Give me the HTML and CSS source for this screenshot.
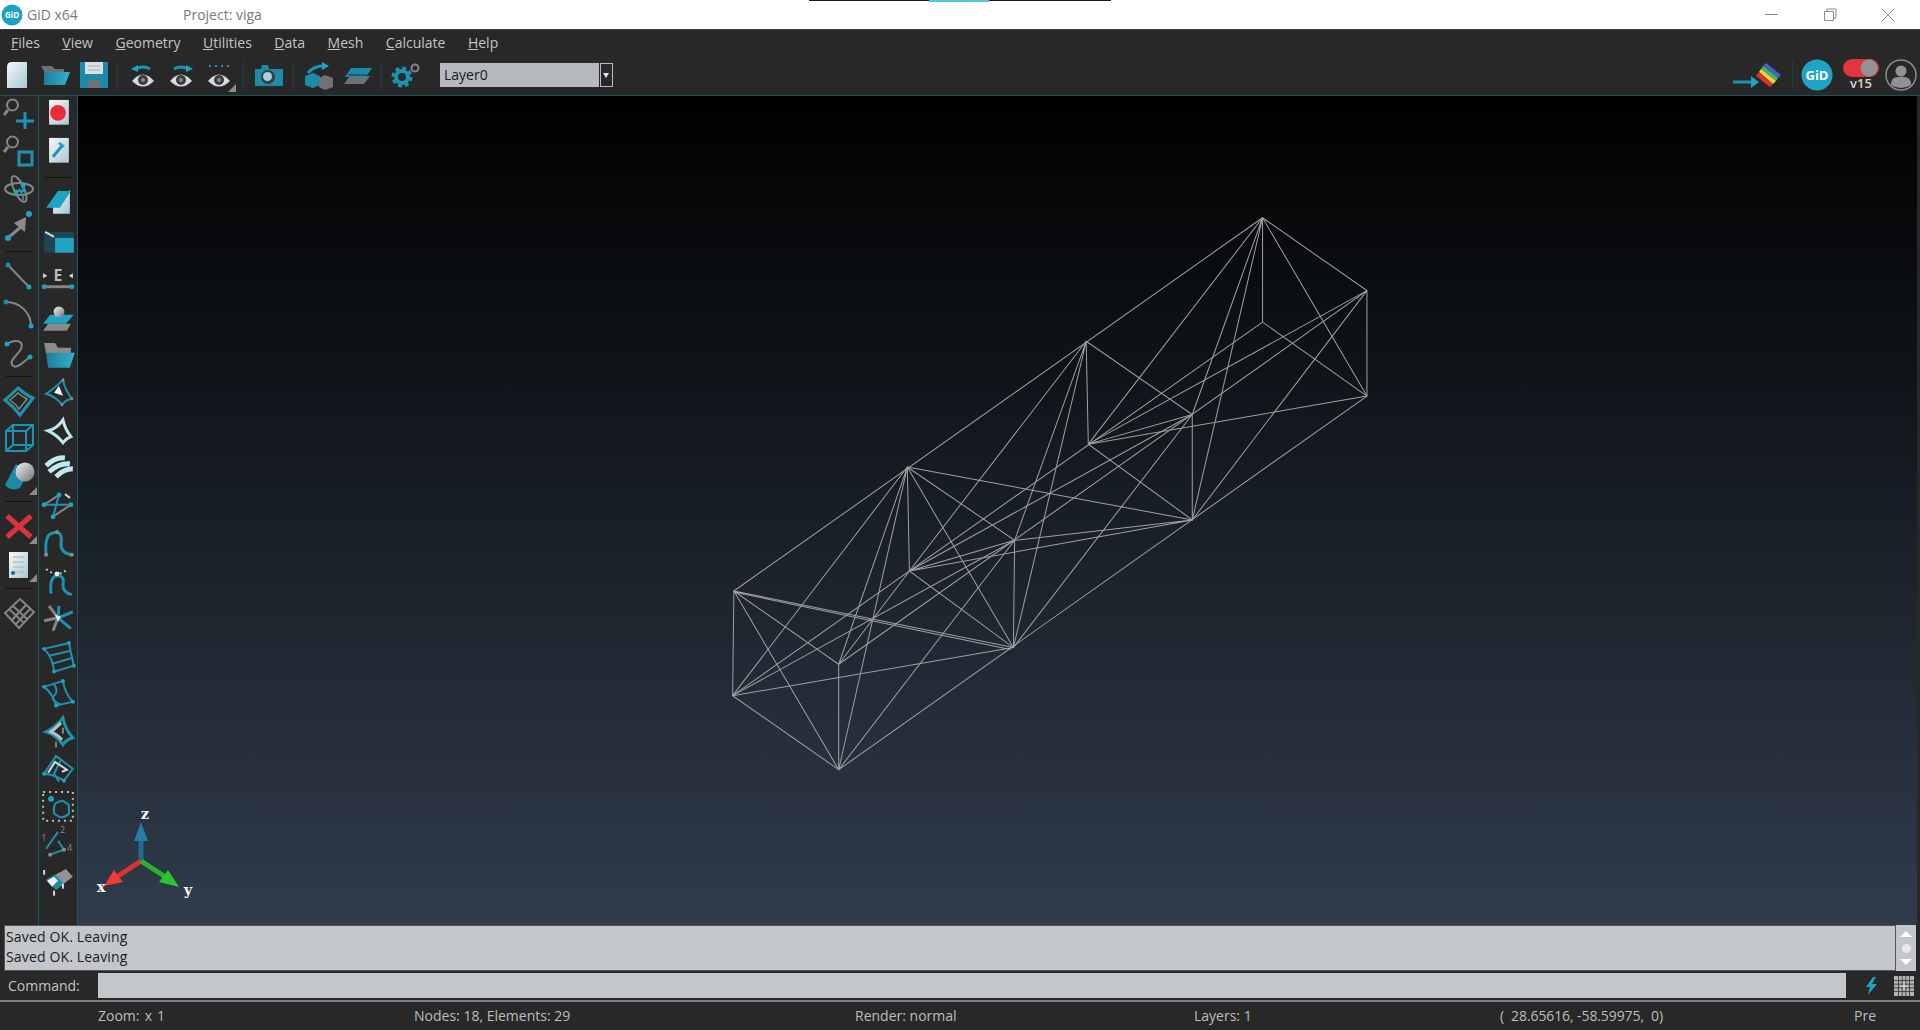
FILE: index.html
```html
<!DOCTYPE html>
<html lang="en">
    <head>
        <meta charset="UTF-8" />
        <title>GiD x64 - Project: viga</title>
        <link rel="stylesheet" href="styles.css">
    </head>
    <body>
        <div class="progress"><span></span></div>
        <header class="titlebar">
            <svg class="title-logo" width="22" height="22" viewBox="0 0 22 22"><circle class="f-teal" cx="11" cy="11" r="10.5"/><text class="logo-text" x="11" y="14" text-anchor="middle">GiD</text></svg>
            <span class="app-name">GiD x64</span>
            <span class="project-name">Project: viga</span>
            <div class="win-buttons">
                <svg width="58" height="28" viewBox="0 0 58 28"><path class="s-win" d="M22 13.5h13"/></svg>
                <svg width="58" height="28" viewBox="0 0 58 28"><path class="s-win" d="M23.5 10.500h9v9h-9zM26 10.500v-2.500h9v9h-2.500"/></svg>
                <svg width="58" height="28" viewBox="0 0 58 28"><path class="s-win" d="M23 8l12 12M35 8l-12 12"/></svg>
            </div>
        </header>

        <nav class="menubar">
            <span class="menu-item"><u>F</u>iles</span>
            <span class="menu-item"><u>V</u>iew</span>
            <span class="menu-item"><u>G</u>eometry</span>
            <span class="menu-item"><u>U</u>tilities</span>
            <span class="menu-item"><u>D</u>ata</span>
            <span class="menu-item"><u>M</u>esh</span>
            <span class="menu-item"><u>C</u>alculate</span>
            <span class="menu-item"><u>H</u>elp</span>
        </nav>

        <div class="toolbar">
            <svg class="tool tool-first" viewBox="0 0 38 38"><defs><linearGradient id="pageFill" x1="0" y1="0" x2="1" y2="1"><stop offset="0" stop-color="#f6f9fa"/><stop offset="1" stop-color="#a9c6d2"/></linearGradient><linearGradient id="folderFill" x1="0" y1="0" x2="1" y2="0"><stop offset="0" stop-color="#1c7f99"/><stop offset="1" stop-color="#33b0cf"/></linearGradient><linearGradient id="sphereFill" x1="0" y1="0" x2="1" y2="1"><stop offset="0" stop-color="#f2f2f2"/><stop offset="1" stop-color="#6f7376"/></linearGradient></defs><path fill="url(#pageFill)" d="M9 11q0-5 5-5h15v26H9z"/></svg>
            <svg class="tool" viewBox="0 0 38 38"><path class="f-grey2" d="M5 10h11l3 3h9v4H9z"/><path fill="url(#folderFill)" d="M8 16h26l-5 13H8z"/></svg>
            <svg class="tool" viewBox="0 0 38 38"><path class="f-teal2" d="M6 6h28v26H6z"/><path class="f-light" d="M11 6h18v12H11z"/><path class="s-dim" d="M14 10h12M14 14h12"/><path class="f-grey2" d="M14 24h12v8H14z"/></svg>
            <i class="tool-sep"></i>
            <svg class="tool" viewBox="0 0 38 38"><path class="s-teal-3" d="M12 13q7-4 14 0"/><path class="f-teal" d="M7 13l7-4v7z"/><path class="f-eye" d="M8 25q11-13 22 0q-11 11-22 0z"/><circle class="f-dark" cx="19" cy="24" r="5"/><circle class="f-grey" cx="19" cy="24" r="2"/></svg>
            <svg class="tool" viewBox="0 0 38 38"><path class="s-teal-3" d="M12 13q7-4 14 0"/><path class="f-teal" d="M31 13l-7-4v7z"/><path class="f-eye" d="M8 25q11-13 22 0q-11 11-22 0z"/><circle class="f-dark" cx="19" cy="24" r="5"/><circle class="f-grey" cx="19" cy="24" r="2"/></svg>
            <svg class="tool" viewBox="0 0 38 38"><path class="s-dots" d="M9 10h20"/><path class="f-eye" d="M8 25q11-13 22 0q-11 11-22 0z"/><circle class="f-dark" cx="19" cy="24" r="5"/><circle class="f-grey" cx="19" cy="24" r="2"/><path class="f-grey" d="M36 28v8h-8z"/></svg>
            <i class="tool-sep"></i>
            <svg class="tool" viewBox="0 0 38 38"><path class="f-teal2" d="M5 13h6l1-4h6l1 4h14v17H5z"/><circle class="f-dark" cx="18" cy="21" r="7"/><circle class="f-light2" cx="17.500" cy="20.500" r="4.500"/></svg>
            <i class="tool-sep"></i>
            <svg class="tool" viewBox="0 0 38 38"><path class="s-teal-3" d="M8 17q6-8 17-7"/><path class="f-teal" d="M29 10l-7-4v8z"/><path class="f-teal2" d="M5 20l8-3 7 3v9l-7 3-8-3z"/><path class="f-grey2" d="M19 22l6-3 8 3v9l-8 3-6-3z"/></svg>
            <svg class="tool" viewBox="0 0 38 38"><path class="f-grey2" d="M12 20h20l-6 8H6z"/><path class="f-teal2" d="M13 12h21l-6 9H7z"/><path class="s-dark" d="M10 19h19"/></svg>
            <i class="tool-sep"></i>
            <svg class="tool" viewBox="0 0 38 38"><circle class="s-teal-4" cx="14" cy="21" r="6"/><circle class="s-gear-teeth" cx="14" cy="21" r="9"/><circle class="s-grey-2" cx="27" cy="12" r="3.500"/></svg>
            <div class="layer-select">
                <span class="layer-value">Layer0</span>
                <span class="layer-arrow"></span>
            </div>
            <div class="toolbar-right">
                <svg width="52" height="28" viewBox="0 0 52 28"><path class="s-teal-3" d="M2 21h21"/><path class="f-teal" d="M28 21l-8-6v12z"/><path fill="#3f66c4" d="M35 2l15 12-3 3-15-12z"/><path fill="#46b56a" d="M32 5l15 12-2 3-15-12z"/><path fill="#f2d23a" d="M30 8l15 12-3 3-14-12z"/><path fill="#d8352f" d="M28 11l14 12-3 3-14-11z"/></svg>
                <i class="tool-sep tool-sep-right"></i>
                <svg class="right-logo" width="32" height="32" viewBox="0 0 32 32"><circle class="f-teal" cx="16" cy="16" r="15.500"/><text class="logo-text logo-text-big" x="16" y="21" text-anchor="middle">GiD</text></svg>
                <div class="version">
                    <svg width="36" height="18" viewBox="0 0 36 18"><rect class="f-red" width="36" height="18" rx="9"/><circle class="f-grey3" cx="26" cy="9" r="8.500"/></svg>
                    <span class="version-text">v15</span>
                </div>
                <svg class="user-icon" width="32" height="32" viewBox="0 0 32 32"><circle class="s-grey-1" cx="16" cy="16" r="15"/><circle class="f-grey3" cx="16" cy="12" r="5.500"/><path class="f-grey3" d="M6 26q0-8 7-8h6q7 0 7 8q-10 6-20 0z"/></svg>
            </div>
        </div>

        <main class="workspace">
            <aside class="sidebar sidebar-a">
                <svg class="side-icon" viewBox="0 0 38 38"><circle class="s-grey-2" cx="12.500" cy="11" r="5.500"/><path class="s-grey-3" d="M8 16l-4 5"/><path class="s-teal-3" d="M25 18v17M16 27h18"/></svg>
                <svg class="side-icon" viewBox="0 0 38 38"><circle class="s-grey-2" cx="12.500" cy="10" r="5.500"/><path class="s-grey-3" d="M8 15l-4 5"/><path class="s-teal-3" d="M19 20h13v13H19z"/></svg>
                <svg class="side-icon" viewBox="0 0 38 38"><ellipse class="s-grey-2" cx="19" cy="19" rx="14" ry="6"/><ellipse class="s-grey-2" cx="19" cy="19" rx="14" ry="5" transform="rotate(65 19 19)"/><path class="s-teal-2" d="M19 19q5 6 4 11M17 21h8M23 13v8"/><circle class="f-teal" cx="23" cy="15" r="2.500"/><circle class="f-teal" cx="16" cy="22" r="2.500"/></svg>
                <svg class="side-icon" viewBox="0 0 38 38"><path class="s-grey-3" d="M9 29l13-11"/><path class="f-grey" d="M26 9l-1 15-11-9z"/><circle class="f-teal" cx="8" cy="30" r="3"/><circle class="f-teal" cx="29" cy="6" r="3"/></svg>
                <i class="side-sep"></i>
                <svg class="side-icon" viewBox="0 0 38 38"><path class="s-grey-2" d="M8 8l21 22"/><circle class="f-teal2" cx="8" cy="8" r="2.500"/><circle class="f-teal" cx="29" cy="30" r="2.500"/></svg>
                <svg class="side-icon" viewBox="0 0 38 38"><path class="s-grey-2" d="M6 7C20 7 31 18 31 31"/><circle class="f-teal2" cx="6" cy="7" r="2.500"/><circle class="f-teal" cx="31" cy="31" r="2.500"/></svg>
                <svg class="side-icon" viewBox="0 0 38 38"><path class="s-grey-2" d="M7 11C14 6 25 7 21 16C17 23 8 28 13 33C18 36 24 28 30 24"/><circle class="f-teal" cx="7" cy="11" r="2.500"/><circle class="f-teal" cx="30" cy="24" r="2.500"/></svg>
                <i class="side-sep"></i>
                <svg class="side-icon" viewBox="0 0 38 38"><path class="s-teal-3" d="M18 6q8 7 15 10q-6 8-13 17q-6-8-15-15q6-5 13-12z"/><path class="s-tan" d="M18 11q5 4 9 6q-4 5-8 10q-3-5-9-9q4-3 8-7z"/></svg>
                <svg class="side-icon" viewBox="0 0 38 38"><path class="s-teal-2" d="M6 11h20v20H6zM13 5h20v20H13zM6 11l7-6M26 11l7-6M6 31l7-6M26 31l7-6"/></svg>
                <svg class="side-icon" viewBox="0 0 38 38"><path class="f-teal2" d="M16 6L5 27q6 7 15 3l7-13z"/><circle fill="url(#sphereFill)" cx="25" cy="14" r="9.500"/><path class="f-grey" d="M37 29v8h-8z"/></svg>
                <i class="side-sep"></i>
                <svg class="side-icon" viewBox="0 0 38 38"><path class="s-red" d="M7 9l24 21M31 9L7 30"/><path class="f-grey" d="M37 29v8h-8z"/></svg>
                <svg class="side-icon" viewBox="0 0 38 38"><path fill="url(#pageFill)" d="M9 7h19v26H9z"/><path class="s-dim" d="M13 12h11M13 17h11M13 22h11M13 27h11"/><circle class="f-teal3" cx="13" cy="28" r="2"/><path class="f-grey" d="M37 29v8h-8z"/></svg>
                <i class="side-sep"></i>
                <svg class="side-icon" viewBox="0 0 38 38"><path class="s-grey-2" d="M20 5l14 13-15 16L5 19zM13 12l14 13M9 15l14 13M26 11L11 27M30 15L15 31"/></svg>
            </aside>
            <aside class="sidebar sidebar-b">
                <svg class="side-icon" viewBox="0 0 38 38"><path fill="url(#pageFill)" d="M10 6h20v25H10z"/><circle class="f-red2" cx="19" cy="19" r="8"/></svg>
                <svg class="side-icon" viewBox="0 0 38 38"><path fill="url(#pageFill)" d="M10 6h20v25H10z"/><path class="s-teal-3" d="M14 25l9-11"/><path class="f-teal" d="M21 10l5 4-2 2-5-4z"/></svg>
                <i class="side-sep side-sep-wide"></i>
                <svg class="side-icon" viewBox="0 0 38 38"><path fill="url(#pageFill)" d="M14 17l17-12v24H14z"/><path class="f-teal" d="M19 6h13l-11 17H7z"/></svg>
                <svg class="side-icon" viewBox="0 0 38 38"><path class="f-tealdark" d="M5 9h30v21H5z"/><path class="f-teal" d="M16 15h19v15H16z"/><path class="s-white-2" d="M6 9l9 5"/></svg>
                <svg class="side-icon" viewBox="0 0 38 38"><text class="e-mark" x="19" y="21" text-anchor="middle">E</text><path class="f-light" d="M8 16l-4-2.500v5zM30 16l4-2.500v5z"/><path class="s-grey-3" d="M6 27h26"/><circle class="f-teal" cx="5" cy="27" r="2.500"/><circle class="f-teal" cx="33" cy="27" r="2.500"/></svg>
                <svg class="side-icon" viewBox="0 0 38 38"><path class="f-grey" d="M9 26h23l-4 7H4z"/><path class="f-teal" d="M11 17h24l-8 9H4z"/><circle fill="url(#sphereFill)" cx="20" cy="14" r="5.500"/></svg>
                <svg class="side-icon" viewBox="0 0 38 38"><path class="f-grey" d="M5 7h11l3 5h13v6H7z"/><path fill="url(#folderFill)" d="M7 17h29l-5 15H9z"/></svg>
                <svg class="side-icon" viewBox="0 0 38 38"><path class="s-teal-2" d="M24 7Q15 16 7 21Q17 24 23 32Q27 27 33 26Q26 17 24 7z"/><path class="f-white" d="M20 13L24 23L15 20z"/><circle class="f-grey" cx="24" cy="7" r="1.500"/><circle class="f-grey" cx="23" cy="32" r="1.500"/><circle class="f-grey" cx="33" cy="26" r="1.500"/></svg>
                <svg class="side-icon" viewBox="0 0 38 38"><path class="s-icy" d="M24 9Q18 18 9 20Q18 24 24 32Q27 28 32 26Q26 18 24 9z"/></svg>
                <svg class="side-icon" viewBox="0 0 38 38"><path class="s-icy-4" d="M7 18Q16 9 26 10M10 24Q20 15 31 16M17 29Q25 21 34 21"/></svg>
                <svg class="side-icon" viewBox="0 0 38 38"><path class="s-grey-2" d="M5 19L20 9M14 31L32 19"/><path class="s-teal-2" d="M5 19H32M14 31L20 9"/><circle class="f-teal" cx="5" cy="19" r="2.500"/><circle class="f-teal" cx="14" cy="31" r="2.500"/><circle class="f-teal" cx="32" cy="19" r="2.500"/><circle class="f-teal" cx="20" cy="9" r="2.500"/><path class="s-white-2" d="M26 8l5 4"/></svg>
                <svg class="side-icon" viewBox="0 0 38 38"><path class="s-teal-3" d="M7 31Q5 10 14 9Q24 6 22 20Q22 30 33 31"/><circle class="f-grey" cx="7" cy="31" r="2"/><circle class="f-grey" cx="33" cy="31" r="2"/><circle class="f-grey" cx="18" cy="8" r="2"/></svg>
                <svg class="side-icon" viewBox="0 0 38 38"><path class="s-teal-3" d="M12 33Q10 16 18 15Q26 14 24 24Q24 32 33 34"/><path class="s-dots-thin" d="M7 8Q18 18 29 8"/><circle class="f-white" cx="18" cy="13" r="2.500"/></svg>
                <svg class="side-icon" viewBox="0 0 38 38"><path class="s-grey-3" d="M5 22L19 19M10 7L19 19M14 32L19 19"/><path class="s-teal-3" d="M19 19L34 13M20 7L19 19M19 19L32 30"/><path class="f-white" d="M16 16l6 2-3 5z"/></svg>
                <svg class="side-icon" viewBox="0 0 38 38"><path class="s-teal-2" d="M5 13L30 7L35 30L15 36Q14 22 5 13zM10 20L32 15M13 28L34 22"/><circle class="f-teal" cx="5" cy="13" r="2"/><circle class="f-teal" cx="30" cy="7" r="2"/><circle class="f-teal" cx="35" cy="30" r="2"/><circle class="f-teal" cx="15" cy="36" r="2"/></svg>
                <svg class="side-icon" viewBox="0 0 38 38"><path class="s-teal-2" d="M5 13L24 7Q26 20 34 28L17 32Q14 20 5 13zM15 10Q20 18 15 22T22 31"/><circle class="f-teal" cx="5" cy="13" r="2"/><circle class="f-teal" cx="24" cy="7" r="2"/><circle class="f-teal" cx="34" cy="28" r="2"/><circle class="f-teal" cx="17" cy="32" r="2"/></svg>
                <svg class="side-icon" viewBox="0 0 38 38"><path class="s-teal-3" d="M24 6Q16 16 7 20Q17 23 24 33Q27 28 34 26Q26 17 24 6z"/><path class="s-light-3" d="M22 11Q16 17 12 20Q19 23 23 28"/><path class="s-grey-2" d="M24 16v6M17 30v6"/></svg>
                <svg class="side-icon" viewBox="0 0 38 38"><path class="s-teal-2" d="M5 25L17 7L34 20L25 32Q16 26 5 25z"/><path class="s-teal-2" d="M22 11L15 25L20 33"/><path class="s-white-2" d="M9 24l7-11 12 8-5 2"/><circle class="f-teal" cx="5" cy="25" r="2"/><circle class="f-teal" cx="25" cy="32" r="2"/></svg>
                <svg class="side-icon" viewBox="0 0 38 38"><path class="s-dots-square" d="M4 5h30v29H4z"/><circle class="f-teal" cx="12" cy="12" r="3"/><path class="s-teal-2" d="M16 17q4-3 8-3l6 4v9q-5 5-10 3l-5-3q-1-6 1-10z"/></svg>
                <svg class="side-icon" viewBox="0 0 38 38"><path class="s-teal-2" d="M7 25L19 8M19 17L25 26L11 31"/><text class="small-num" x="2" y="17">1</text><text class="small-num" x="21" y="9">2</text><text class="small-num" x="28" y="27">4</text><circle class="f-grey" cx="11" cy="31" r="2"/><circle class="f-grey" cx="25" cy="26" r="2"/></svg>
                <svg class="side-icon" viewBox="0 0 38 38"><path class="f-grey3" d="M7 18L27 7L34 15L17 28z"/><path class="f-teal2" d="M7 18l9-5 8 8-7 7z"/><path class="f-white" d="M8 19l7-4 4 4-6 6z"/><path class="s-white-2" d="M5 8v5M24 22v5M15 29v5"/></svg>
            </aside>
            <section class="viewport">
                <svg class="wire-model" viewBox="0 0 1568 1568" preserveAspectRatio="none">
                    <g class="wire">
                        <!-- lengthwise edges -->
                        <path d="M33 1057L1289 48M282 1255L1537 245M282 1540L1537 530M30 1340L1289 330"/>
                        <!-- cross sections -->
                        <path d="M33 1057L30 1340L282 1540L282 1255Z"/>
                        <path d="M445 722L450 1003L697 1210L700 920Z"/>
                        <path d="M870 382L875 660L1122 865L1122 580Z"/>
                        <path d="M1289 48L1289 330L1537 530L1537 245Z"/>
                        <path d="M33 1057L282 1540M445 722L697 1210M1289 48L1537 530"/>
                        <!-- bay 1 -->
                        <path d="M445 722L30 1340M445 722L282 1255M445 722L282 1540M30 1340L697 1210M33 1057L697 1210M33 1060L690 1215M30 1340L700 920M282 1540L700 920M282 1255L450 1003"/>
                        <!-- bay 2 -->
                        <path d="M870 382L450 1003M870 382L700 920M870 382L697 1210M450 1003L1122 865M445 722L1122 865M450 1003L1122 580M697 1210L1122 580M450 1003L700 920M700 920L1122 865"/>
                        <!-- bay 3 -->
                        <path d="M1289 48L875 660M1289 48L1122 580M1289 48L1122 865M875 660L1537 530M875 660L1537 245M1122 865L1537 245M875 660L1122 580"/>
                    </g>
                </svg>
                <svg class="triad" width="110" height="100" viewBox="0 0 110 100">
                    <path class="axis-z" d="M28 59V38"/>
                    <path class="head-z" d="M28 20l7 19-4 0-6 0-4 0z"/>
                    <path class="axis-x" d="M28 59L5 74"/>
                    <path class="head-x" d="M-9 84L1 68l9 12z"/>
                    <path class="axis-y" d="M28 59L51 74"/>
                    <path class="head-y" d="M66 85L55 68l-9 12z"/>
                    <text class="axis-label" x="28" y="17">z</text>
                    <text class="axis-label" x="-16" y="90">x</text>
                    <text class="axis-label" x="71" y="93">y</text>
                </svg>
            </section>
            <div class="right-strip"></div>
        </main>

        <section class="messages">
            <div class="message-box">
                <div>Saved OK. Leaving</div>
                <div>Saved OK. Leaving</div>
            </div>
            <div class="scroll-strip">
                <span class="arrow-up"></span>
                <span class="scroll-dot"></span>
                <span class="arrow-down"></span>
            </div>
        </section>

        <section class="command-row">
            <label class="command-label" for="command">Command:</label>
            <div class="command-input" id="command"></div>
            <svg class="bolt" width="16" height="20" viewBox="0 0 16 20"><path class="f-teal" d="M9 1L2 11h4l-2 8 9-11H8l4-7z"/></svg>
            <svg class="grid-btn" width="20" height="20" viewBox="0 0 22 22"><path class="f-grid" d="M0 0h22v22H0z"/><path class="s-grid" d="M5 0v22M9 0v22M13 0v22M17 0v22M0 5h22M0 9h22M0 13h22M0 17h22"/><path class="s-white-1" d="M11 7v8M7 11h8"/></svg>
        </section>

        <footer class="statusbar">
            <span class="status status-zoom">Zoom: x 1</span>
            <span class="status status-nodes">Nodes: 18, Elements: 29</span>
            <span class="status status-render">Render: normal</span>
            <span class="status status-layers">Layers: 1</span>
            <span class="status status-coords">(&nbsp; 28.65616, -58.59975,&nbsp; 0)</span>
            <span class="status">Pre</span>
        </footer>
    </body>
</html>
```

FILE: styles.css
```css
* {
    box-sizing: border-box;
}
html,
body {
    height: 100%;
}
body {
    margin: 0;
    display: flex;
    flex-direction: column;
    width: 1920px;
    height: 1030px;
    overflow: hidden;
    position: relative;
    background-color: #282828;
    color: #c4c4c4;
    font-family: "Open Sans", "Noto Sans", sans-serif;
    font-size: 14px;
}

/* window title */
.progress {
    position: absolute;
    top: 0;
    left: 809px;
    width: 302px;
    height: 1px;
    background-color: #1c1c1c;
}
.progress span {
    display: block;
    width: 60px;
    height: 2px;
    margin-left: 120px;
    background-color: #4fc7d6;
}
.titlebar {
    display: flex;
    align-items: center;
    height: 29px;
    flex: none;
    background-color: #fff;
    color: #7b7b7b;
}
.title-logo {
    margin-left: 1px;
}
.app-name {
    margin-left: 4px;
    width: 156px;
}
.win-buttons {
    display: flex;
    margin-left: auto;
    margin-right: 3px;
}
.logo-text {
    fill: #fff;
    font-size: 8px;
    font-weight: 700;
}
.logo-text-big {
    font-size: 13px;
}

/* menu and toolbar */
.menubar {
    display: flex;
    align-items: center;
    flex: none;
    height: 26px;
    padding-left: 11px;
    border-top: 1px solid #3a3a3a;
}
.menu-item {
    margin-right: 22.500px;
}
.toolbar {
    display: flex;
    align-items: center;
    flex: none;
    height: 41px;
    padding-bottom: 1px;
    border-bottom: 1px solid #1d4f5c;
}
.tool {
    width: 38px;
    height: 38px;
    flex: none;
}
.tool-first {
    margin-left: -2px;
}
.tool-sep {
    display: block;
    flex: none;
    width: 1px;
    height: 28px;
    margin: 0 6px 0 5px;
    background-color: #16404b;
}
.layer-select {
    display: flex;
    align-items: center;
    height: 24px;
    margin-left: 14px;
}
.layer-value {
    width: 159px;
    height: 24px;
    padding-left: 4px;
    line-height: 23px;
    background-color: #b6b9be;
    color: #1c1c1c;
}
.layer-arrow {
    position: relative;
    width: 13px;
    height: 24px;
    margin-left: 1px;
    border: 1px solid #b6b9be;
}
.layer-arrow::after {
    content: "";
    position: absolute;
    top: 9px;
    left: 2px;
    border-top: 5px solid #e4e4e4;
    border-left: 3.500px solid transparent;
    border-right: 3.500px solid transparent;
}
.toolbar-right {
    display: flex;
    align-items: center;
    margin-left: auto;
    padding-right: 3px;
}
.tool-sep-right {
    margin: 0 8px 0 9px;
}
.right-logo {
    margin-right: 10px;
}
.version {
    display: flex;
    flex-direction: column;
    align-items: center;
    width: 36px;
    margin-right: 6px;
}
.version-text {
    margin-top: -1px;
    font-size: 13px;
    line-height: 14px;
    font-weight: 600;
    color: #d4d4d4;
}

/* middle area */
.workspace {
    display: flex;
    flex: none;
    height: 829px;
}
.sidebar {
    display: flex;
    flex-direction: column;
    flex: none;
    border-right: 1px solid #1d5866;
}
.sidebar-a {
    width: 39px;
}
.sidebar-b {
    width: 39px;
}
.side-icon {
    display: block;
    flex: none;
    width: 38px;
    height: 38px;
}
.side-icon:first-child {
    margin-top: -2px;
}
.sidebar-b .side-icon {
    height: 37.600px;
}
.side-sep {
    display: block;
    flex: none;
    height: 1px;
    margin: 5px 6px;
    background-color: #101010;
}
.side-sep-wide {
    margin: 8px 6px 7px;
}
.viewport {
    position: relative;
    flex: 1;
    background: linear-gradient(#000 0%, #303c4c 100%);
}
.right-strip {
    flex: none;
    width: 3px;
}
.wire-model {
    position: absolute;
    left: 642px;
    top: 104px;
    width: 660px;
    height: 580px;
}
.wire path {
    fill: none;
    stroke: #9fa1a2;
    stroke-width: 1;
    vector-effect: non-scaling-stroke;
}
.triad {
    position: absolute;
    left: 35px;
    top: 706px;
    overflow: visible;
}
.axis-z {
    stroke: #1e6b93;
    stroke-width: 5;
}
.head-z {
    fill: #2a7aa6;
}
.axis-x {
    stroke: #d9342f;
    stroke-width: 5;
}
.head-x {
    fill: #ee3b36;
}
.axis-y {
    stroke: #27b52a;
    stroke-width: 5;
}
.head-y {
    fill: #2ac72c;
}
.axis-label {
    fill: #fff;
    font-family: "DejaVu Serif", serif;
    font-size: 14px;
    font-weight: 700;
}

/* messages and command line */
.messages {
    display: flex;
    flex: none;
    height: 47px;
    padding: 0 4px 1px 4px;
}
.message-box {
    flex: 1;
    height: 46px;
    padding: 1px 1px;
    border: 1px solid #555;
    line-height: 20px;
    letter-spacing: 0.150px;
    background-color: #c3c6cb;
    color: #1c1c1c;
}
.scroll-strip {
    display: flex;
    flex-direction: column;
    align-items: center;
    justify-content: space-between;
    width: 20px;
    height: 46px;
    padding: 6px 0;
    background-color: #c3c6cb;
}
.arrow-up {
    border-bottom: 6px solid #fff;
    border-left: 6px solid transparent;
    border-right: 6px solid transparent;
}
.arrow-down {
    border-top: 6px solid #fff;
    border-left: 6px solid transparent;
    border-right: 6px solid transparent;
}
.scroll-dot {
    width: 9px;
    height: 9px;
    border-radius: 50%;
    background-color: #e8e8e8;
}
.command-row {
    display: flex;
    align-items: center;
    flex: none;
    height: 30px;
    padding-bottom: 1px;
    border-bottom: 2px solid #7f8184;
}
.command-label {
    width: 98px;
    padding-left: 8px;
}
.command-input {
    width: 1748px;
    height: 25px;
    background-color: #c3c6cb;
}
.bolt {
    margin-left: 18px;
}
.grid-btn {
    margin-left: 14px;
}
.statusbar {
    display: flex;
    align-items: center;
    flex: 1;
    padding-left: 98px;
    padding-bottom: 2px;
    color: #bdbdbd;
}
.status-zoom {
    width: 316px;
    word-spacing: 1.500px;
}
.status-nodes {
    width: 441px;
}
.status-render {
    width: 339px;
}
.status-layers {
    width: 306px;
}
.status-coords {
    width: 354px;
    letter-spacing: -0.100px;
}

/* icon fills and strokes */
.f-teal { fill: #1fa3c4; }
.f-teal2 { fill: #1c8ba8; }
.f-teal3 { fill: #0f6f88; }
.f-tealdark { fill: #1c4652; }
.f-grey { fill: #8b8b8b; }
.f-grey2 { fill: #6e7275; }
.f-grey3 { fill: #8f9396; }
.f-white { fill: #eef1f2; }
.f-eye { fill: #d6d9db; }
.f-light { fill: #d9dfe2; }
.f-light2 { fill: #a9cfdb; }
.f-dark { fill: #3a3d40; }
.f-red { fill: #e2353f; }
.f-red2 { fill: #ec2a3a; }
.f-grid { fill: #b0b2b5; }
.s-teal-2, .s-teal-3, .s-teal-4, .s-gear-teeth, .s-grey-1, .s-grey-2, .s-grey-3, .s-white-1, .s-white-2,
.s-light-3, .s-icy, .s-icy-4, .s-tan, .s-red, .s-dim, .s-dark, .s-dots, .s-dots-thin,
.s-dots-square, .s-grid, .s-win {
    fill: none;
}
.s-teal-2 { stroke: #1b93b1; stroke-width: 2; }
.s-teal-3 { stroke: #1b93b1; stroke-width: 3; }
.s-teal-4 { stroke: #1b93b1; stroke-width: 4; }
.s-gear-teeth { stroke: #1b93b1; stroke-width: 3; stroke-dasharray: 4 3.070; }
.s-grey-1 { stroke: #8b8b8b; stroke-width: 1.500; }
.s-grey-2 { stroke: #858585; stroke-width: 2; }
.s-grey-3 { stroke: #858585; stroke-width: 3; }
.s-white-1 { stroke: #fff; stroke-width: 1; }
.s-white-2 { stroke: #d5dadc; stroke-width: 2; }
.s-light-3 { stroke: #b9c0c3; stroke-width: 3; }
.s-icy { stroke: #c3e6ec; stroke-width: 3; }
.s-icy-4 { stroke: #bfe8ef; stroke-width: 5; }
.s-tan { stroke: #8f857a; stroke-width: 1.500; }
.s-red { stroke: #d9343d; stroke-width: 5; }
.s-dim { stroke: #b9bec1; stroke-width: 1.500; }
.s-dark { stroke: #282828; stroke-width: 1; }
.s-dots { stroke: #1b93b1; stroke-width: 2; stroke-dasharray: 2 4; }
.s-dots-thin { stroke: #c4c4c4; stroke-width: 2; stroke-dasharray: 2 3; }
.s-dots-square { stroke: #bdbdbd; stroke-width: 2; stroke-dasharray: 2 4; }
.s-grid { stroke: #3d3f42; stroke-width: 1; }
.s-win { stroke: #8a8a8a; stroke-width: 1; }
.e-mark {
    fill: #bbb;
    font-size: 16px;
    font-weight: 700;
}
.small-num {
    fill: #888;
    font-size: 9px;
}
```
